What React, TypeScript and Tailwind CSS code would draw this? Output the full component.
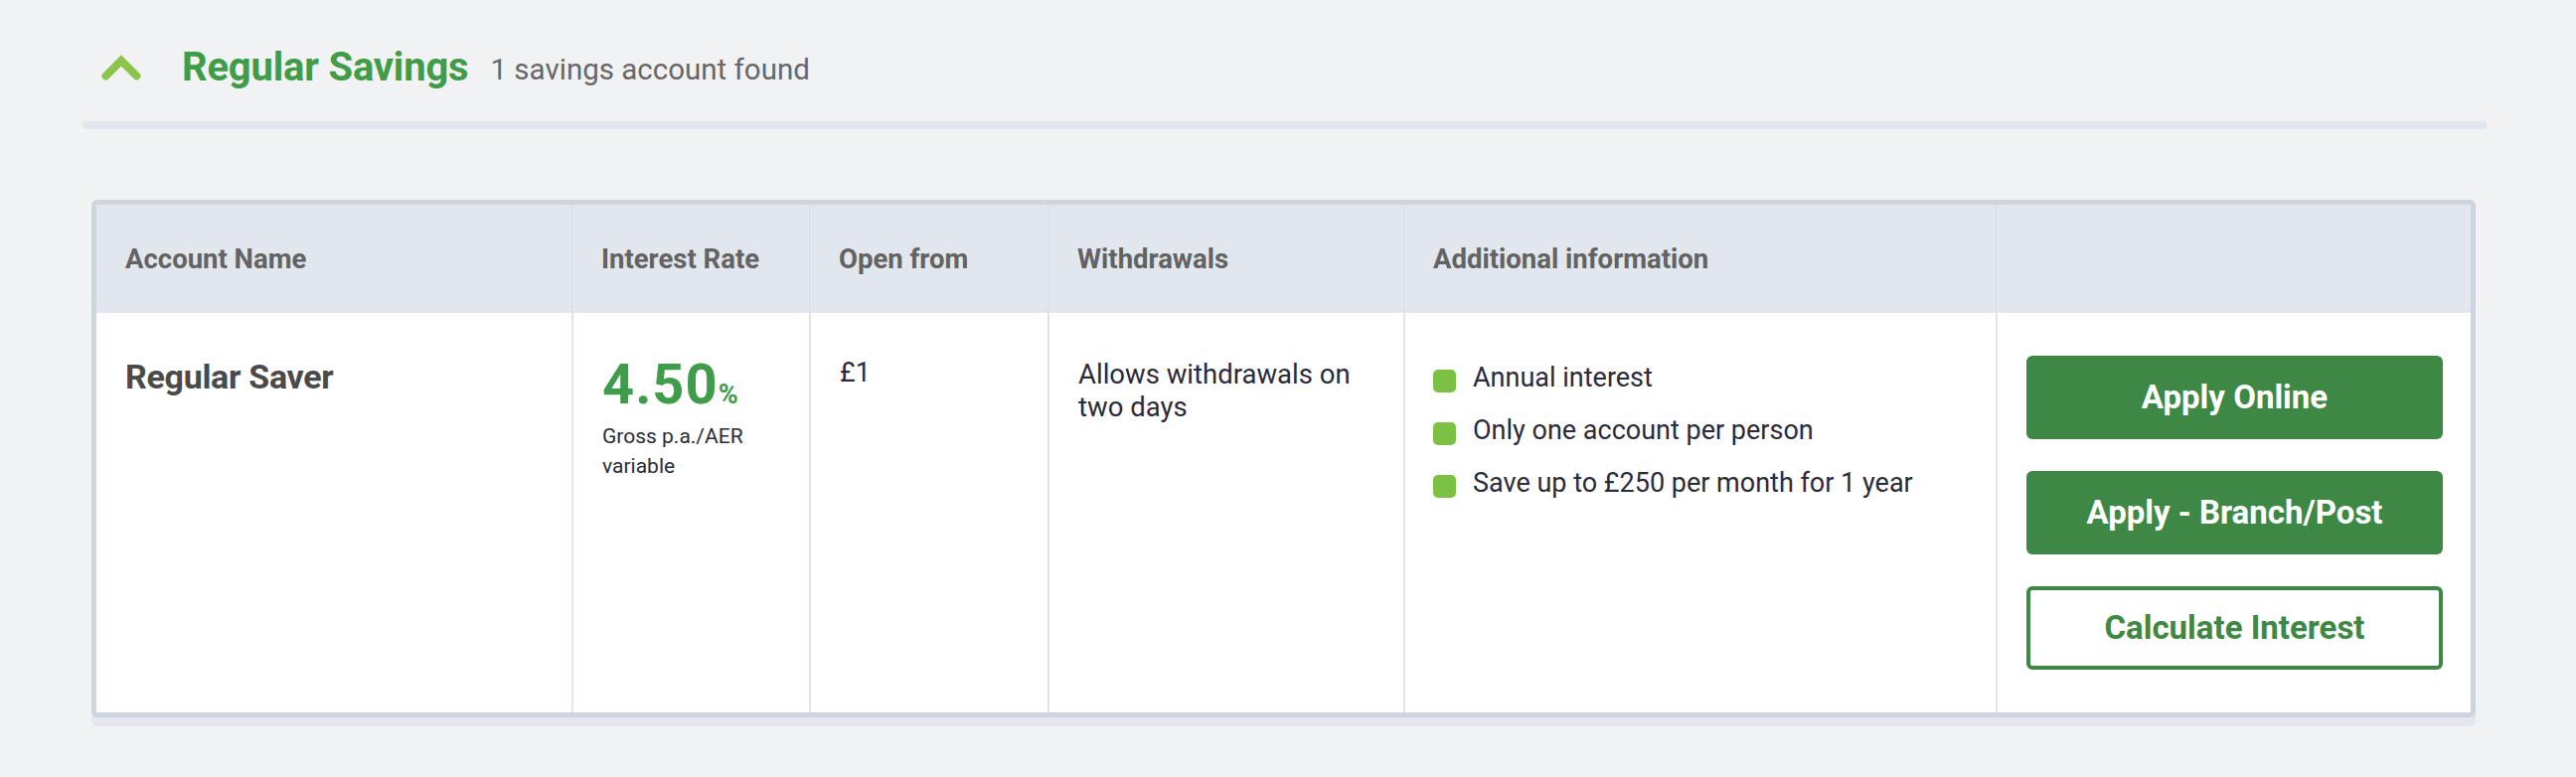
import React from "react";

const columns = [
  "Account Name",
  "Interest Rate",
  "Open from",
  "Withdrawals",
  "Additional information",
  "",
];

const extras = [
  "Annual interest",
  "Only one account per person",
  "Save up to £250 per month for 1 year",
];

const ChevronUpIcon = () => (
  <svg width="40" height="26" viewBox="0 0 40 26" className="overflow-visible">
    <polyline
      points="4.5,21.5 20,6 35.5,21.5"
      fill="none"
      stroke="#8cc44b"
      strokeWidth="8"
      strokeLinecap="round"
      strokeLinejoin="miter"
    />
  </svg>
);

const App = () => {
  return (
    <div
      className="min-h-screen bg-[#f1f2f4] pl-[83px] pr-[89px] pt-[44px] pb-[40px]"
      style={{ fontFamily: "Roboto, 'Open Sans', sans-serif" }}
    >
      {/* Section heading */}
      <div className="flex items-center h-[48px] pl-[19px]">
        <ChevronUpIcon />
        <h2 className="ml-[41px] text-[40px] font-bold text-[#409c48] tracking-[-0.2px]">
          Regular Savings
        </h2>
        <span className="ml-[22px] mt-[4px] text-[29.5px] text-[#676767]">
          1 savings account found
        </span>
      </div>
      <div className="mt-[30px] h-[8px] rounded-full bg-[#e2e6ed]" />

      {/* Accounts table */}
      <div className="mt-[71px] ml-[9px] mr-[12px] rounded-[6px] border-[5px] border-[#cfd5de] bg-white shadow-[0_9px_0_0_#e3e7ed] overflow-hidden">
        <div className="grid grid-cols-[478px_239px_240px_358px_596px_1fr] bg-[#e2e7ee] h-[109px]">
          {columns.map((col, i) => (
            <div
              key={i}
              className={`flex items-center px-[29px] text-[27.5px] font-bold text-[#636363] ${
                i > 0 ? "border-l border-[#d8dde5]" : ""
              }`}
            >
              {col}
            </div>
          ))}
        </div>

        <div className="grid grid-cols-[478px_239px_240px_358px_596px_1fr] h-[402px] text-[#2b2b3a]">
          <div className="px-[29px] pt-[44px]">
            <div className="text-[34px] leading-[40px] font-bold text-[#4a4a4a] tracking-[-0.3px]">
              Regular Saver
            </div>
          </div>

          <div className="border-l-2 border-[#e1e3e7] px-[29px] pt-[44px]">
            <div className="flex items-baseline leading-none font-bold text-[#3f9c4a]">
              <span className="text-[56px] tracking-[1px]">4.50</span>
              <span className="text-[27px]">%</span>
            </div>
            <div className="mt-[9px] text-[21px] leading-[30px]">
              Gross p.a./AER variable
            </div>
          </div>

          <div className="border-l-2 border-[#e1e3e7] px-[29px] pt-[44px]">
            <div className="text-[27px] leading-[33px]">£1</div>
          </div>

          <div className="border-l-2 border-[#e1e3e7] px-[29px] pt-[45px]">
            <div className="text-[27.5px] leading-[33px]">
              Allows withdrawals on two days
            </div>
          </div>

          <div className="border-l-2 border-[#e1e3e7] px-[28px] pt-[49px]">
            <ul className="flex flex-col gap-[20px]">
              {extras.map((item) => (
                <li key={item} className="flex items-start text-[27px] leading-[33px]">
                  <span className="mt-[8px] h-[23px] w-[23px] shrink-0 rounded-[5px] bg-[#7bc143]" />
                  <span className="ml-[17px]">{item}</span>
                </li>
              ))}
            </ul>
          </div>

          <div className="border-l-2 border-[#e1e3e7] pl-[29px] pr-[28px] pt-[43px] flex flex-col gap-[32px]">
            <button className="h-[84px] w-full rounded-[6px] bg-[#3e8846] text-[33px] font-bold text-white">
              Apply Online
            </button>
            <button className="h-[84px] w-full rounded-[6px] bg-[#3e8846] text-[33px] font-bold text-white">
              Apply - Branch/Post
            </button>
            <button className="h-[84px] w-full rounded-[6px] border-[4px] border-[#3e8846] bg-white text-[33px] font-bold text-[#3e8846]">
              Calculate Interest
            </button>
          </div>
        </div>
      </div>
    </div>
  );
};

export default App;
